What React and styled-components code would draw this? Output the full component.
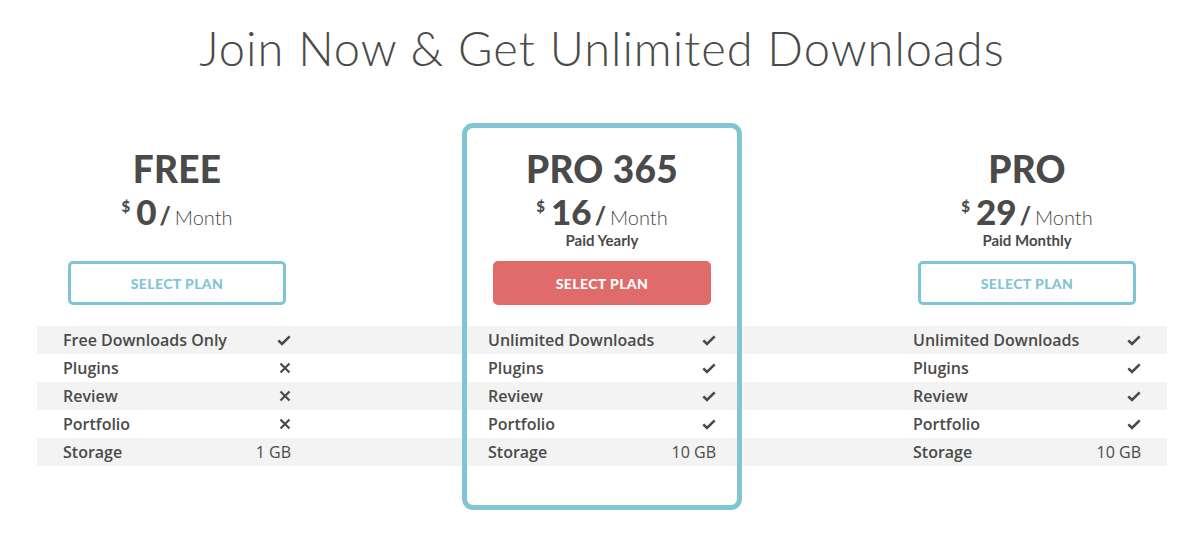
import React from "react";
import styled, { createGlobalStyle } from "styled-components";

const GlobalStyle = createGlobalStyle`
  body {
    margin: 0;
    background: #fff;
    font-family: Lato, "Liberation Sans", sans-serif;
    color: #4a4a4a;
  }
`;

const plans = [
  {
    name: "FREE",
    price: "0",
    note: "",
    featured: false,
    features: [
      ["Free Downloads Only", "check"],
      ["Plugins", "cross"],
      ["Review", "cross"],
      ["Portfolio", "cross"],
      ["Storage", "1 GB"],
    ],
  },
  {
    name: "PRO 365",
    price: "16",
    note: "Paid Yearly",
    featured: true,
    features: [
      ["Unlimited Downloads", "check"],
      ["Plugins", "check"],
      ["Review", "check"],
      ["Portfolio", "check"],
      ["Storage", "10 GB"],
    ],
  },
  {
    name: "PRO",
    price: "29",
    note: "Paid Monthly",
    featured: false,
    features: [
      ["Unlimited Downloads", "check"],
      ["Plugins", "check"],
      ["Review", "check"],
      ["Portfolio", "check"],
      ["Storage", "10 GB"],
    ],
  },
];

const Page = styled.main`
  padding: 20px 16px 0 37px;
`;

const Title = styled.h1`
  margin: 0 0 47px;
  text-align: center;
  font-family: Lato, sans-serif;
  font-weight: 300;
  font-size: 47px;
  line-height: 56px;
  letter-spacing: 1px;
  color: #4a4a4a;
`;

const Plans = styled.div`
  display: grid;
  grid-template-columns: repeat(3, 280px);
  grid-template-rows: 203px repeat(5, 28px) 44px;
  column-gap: 145px;
`;

const Header = styled.div`
  grid-column: ${(p) => p.$col};
  grid-row: 1;
  display: flex;
  flex-direction: column;
  align-items: center;
  padding-top: 24px;
`;

const PlanName = styled.h2`
  margin: 0;
  font-weight: 900;
  font-size: 37px;
  line-height: 44px;
  letter-spacing: 0.3px;
  color: #4a4a4a;
`;

const Price = styled.div`
  display: flex;
  align-items: baseline;
  height: 40px;
  line-height: 40px;
  color: #4a4a4a;
`;

const Currency = styled.span`
  align-self: flex-start;
  font-weight: 900;
  font-size: 15px;
  line-height: 18px;
  margin: 6px 6px 0 0;
`;

const Amount = styled.span`
  font-weight: 900;
  font-size: 35px;
`;

const Slash = styled.span`
  font-weight: 900;
  font-size: 24px;
  margin: 0 4px 0 3px;
`;

const Period = styled.span`
  font-weight: 300;
  font-size: 20px;
`;

const Note = styled.div`
  height: 18px;
  font-weight: 700;
  font-size: 15px;
  line-height: 18px;
`;

const SelectButton = styled.button`
  margin-top: 12px;
  width: 218px;
  height: 44px;
  border-radius: 5px;
  border: 3px solid ${(p) => (p.$featured ? "#df6b6b" : "#80c5d3")};
  background: ${(p) => (p.$featured ? "#df6b6b" : "#fff")};
  color: ${(p) => (p.$featured ? "#fff" : "#80c5d3")};
  font-family: Lato, sans-serif;
  font-weight: 900;
  font-size: 14px;
  letter-spacing: 0.4px;
  cursor: pointer;
`;

const Stripe = styled.div`
  grid-column: 1 / -1;
  grid-row: ${(p) => p.$row};
  background: #f3f3f3;
`;

const FeatureRow = styled.div`
  grid-column: ${(p) => p.$col};
  grid-row: ${(p) => p.$row};
  display: flex;
  align-items: center;
  justify-content: space-between;
  padding: 0 26px;
  font-family: "Open Sans", sans-serif;
  font-weight: 600;
  font-size: 16px;
  color: #4a4a4a;
`;

const Value = styled.span`
  display: flex;
  align-items: center;
  font-weight: 500;
`;

const Frame = styled.div`
  grid-column: 2;
  grid-row: 1 / -1;
  border: 5px solid #80c5d3;
  border-radius: 11px;
  pointer-events: none;
  z-index: 1;
`;

const Check = () => (
  <svg width="14" height="11" viewBox="0 0 14 11">
    <path d="M1.3 5.3 L5 9 L12.7 1.3" fill="none" stroke="#4a4a4a" strokeWidth="2.6" />
  </svg>
);

const Cross = () => (
  <svg width="12" height="12" viewBox="0 0 12 12">
    <path d="M1.5 1.5 L10.5 10.5 M10.5 1.5 L1.5 10.5" fill="none" stroke="#4a4a4a" strokeWidth="2.2" />
  </svg>
);

const renderValue = (v) => {
  if (v === "check") return <Check />;
  if (v === "cross") return <Cross />;
  return v;
};

export default function App() {
  return (
    <>
      <GlobalStyle />
      <Page>
        <Title>Join Now &amp; Get Unlimited Downloads</Title>
        <Plans>
          {[0, 2, 4].map((i) => (
            <Stripe key={i} $row={i + 2} />
          ))}
          {plans.map((plan, col) => (
            <React.Fragment key={plan.name}>
              <Header $col={col + 1}>
                <PlanName>{plan.name}</PlanName>
                <Price>
                  <Currency>$</Currency>
                  <Amount>{plan.price}</Amount>
                  <Slash>/</Slash>
                  <Period>Month</Period>
                </Price>
                <Note>{plan.note}</Note>
                <SelectButton $featured={plan.featured}>SELECT PLAN</SelectButton>
              </Header>
              {plan.features.map(([label, value], i) => (
                <FeatureRow key={label} $col={col + 1} $row={i + 2}>
                  <span>{label}</span>
                  <Value>{renderValue(value)}</Value>
                </FeatureRow>
              ))}
            </React.Fragment>
          ))}
          <Frame />
        </Plans>
      </Page>
    </>
  );
}
